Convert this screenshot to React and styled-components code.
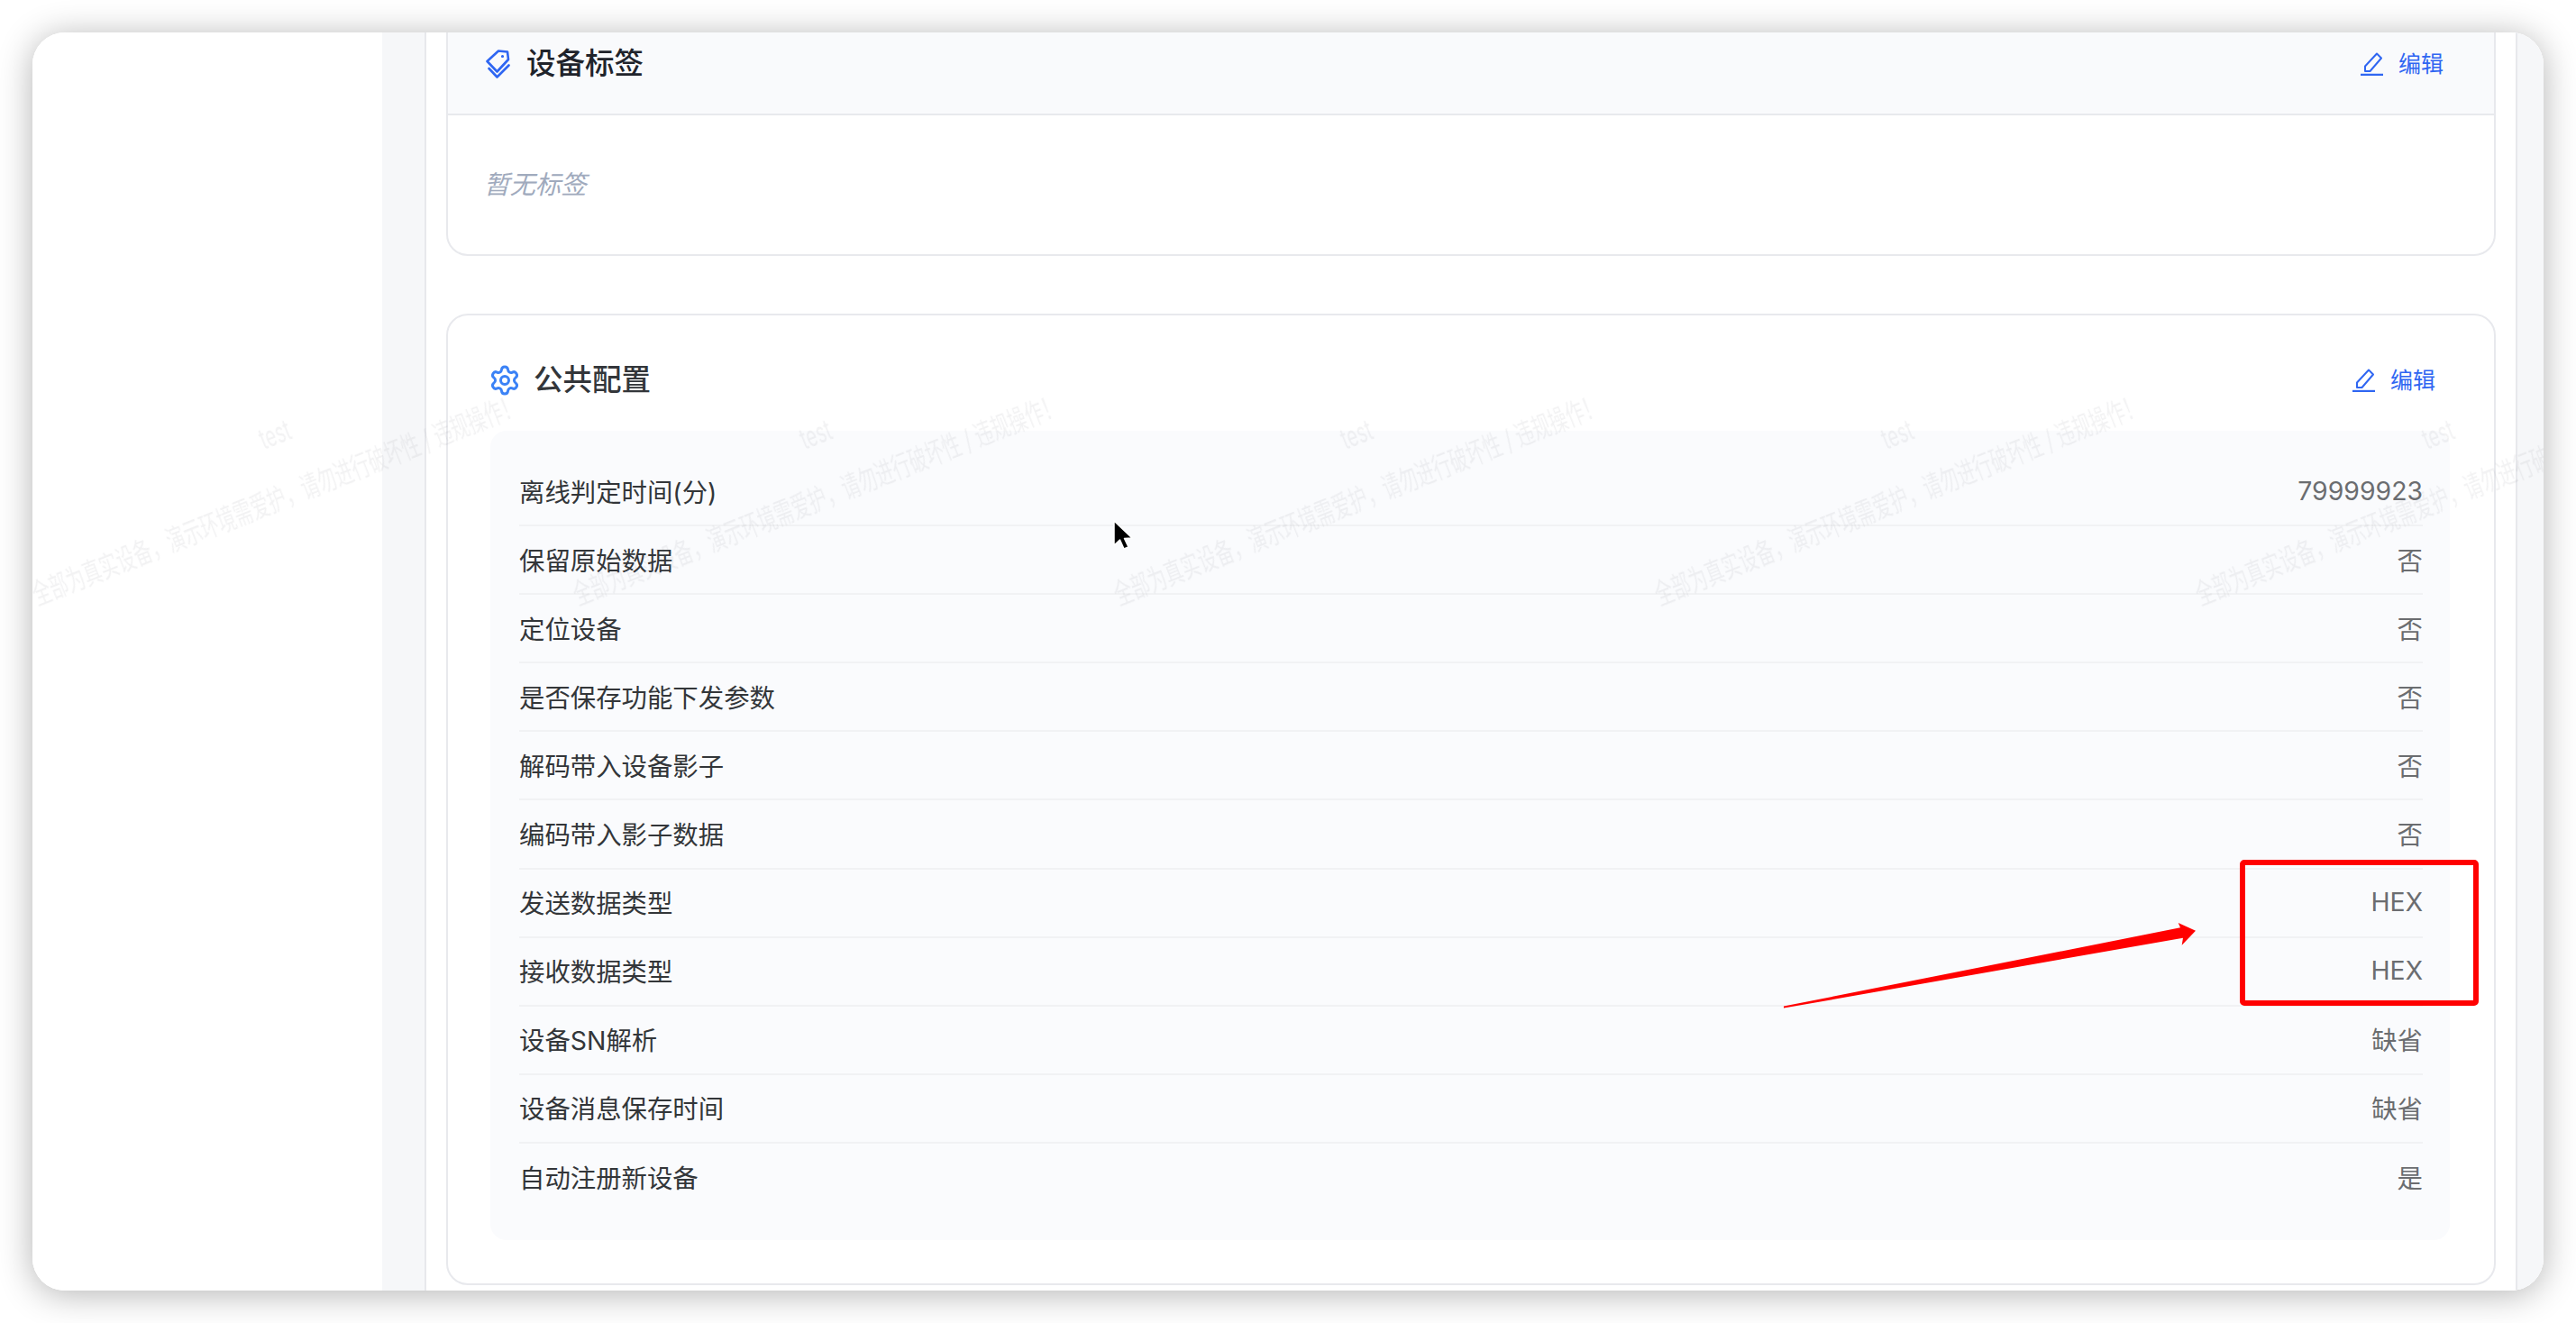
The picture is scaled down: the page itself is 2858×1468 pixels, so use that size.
import React from 'react';
import styled, { createGlobalStyle } from 'styled-components';
import { Settings } from 'lucide-react';

const FONT = `Inter, "Noto Sans CJK SC", "Noto Sans", sans-serif`;

const Global = createGlobalStyle`
  html, body { margin: 0; padding: 0; background: #fff; }
  body { font-family: ${FONT}; }
  * { box-sizing: border-box; }
`;

const Page = styled.div`
  position: relative;
  width: 2858px;
  height: 1468px;
  padding: 36px;
  background: #fff;
  overflow: hidden;
`;

const AppWindow = styled.div`
  position: relative;
  display: flex;
  width: 2786px;
  height: 1396px;
  border-radius: 36px;
  overflow: hidden;
  background: #fff;
`;

const WindowShadow = styled.div`
  position: absolute;
  left: 36px;
  top: 36px;
  width: 2786px;
  height: 1396px;
  border-radius: 36px;
  box-shadow: 0 4px 38px rgba(0, 0, 0, 0.3);
`;

const Sidebar = styled.aside`
  flex: 0 0 388px;
  background: #fff;
`;

const LeftGutter = styled.div`
  flex: 0 0 49px;
  background: #f6f7f9;
  border-right: 2px solid #e7e8ec;
`;

const RightGutter = styled.div`
  flex: 0 0 31px;
  background: #f6f7f9;
  border-left: 2px solid #e7e8ec;
`;

const Main = styled.main`
  flex: 1;
  min-width: 0;
  padding: 0 22px 0 22px;
  background: #fff;
  overflow: hidden;
`;

const TagCard = styled.section`
  margin-top: -23px;
  border: 2px solid #e8e9ed;
  border-radius: 24px;
  height: 271px;
  overflow: hidden;
`;

const TagHeader = styled.header`
  display: flex;
  align-items: center;
  justify-content: space-between;
  height: 113px;
  padding: 0 56px 0 42px;
  background: #f9fafc;
  border-bottom: 2px solid #e8e9ed;
`;

const Title = styled.h2`
  display: flex;
  align-items: center;
  gap: ${(p) => p.$gap}px;
  margin: 0;
  font-size: 32.5px;
  font-weight: 500;
  line-height: 40px;
  color: ${(p) => p.$color};
`;

const EditButton = styled.button`
  display: flex;
  align-items: center;
  gap: 17px;
  padding: 0;
  border: 0;
  background: none;
  font-family: ${FONT};
  font-size: 25px;
  line-height: 32px;
  color: #2f66f2;
`;

const EmptyText = styled.p`
  margin: 0;
  padding: 0 40px;
  height: 149px;
  display: flex;
  align-items: center;
  font-size: 28.4px;
  font-style: italic;
  color: #a0aabd;
`;

const ConfigCard = styled.section`
  margin-top: 64px;
  height: 1078px;
  padding: 0 49px 0 47px;
  border: 2px solid #e8e9ed;
  border-radius: 24px;
`;

const ConfigHeader = styled.header`
  display: flex;
  align-items: center;
  justify-content: space-between;
  height: 128px;
  padding: 15px 16px 0 0;
`;

const GearIcon = styled(Settings)`
  margin-left: -2px;
`;

const Panel = styled.div`
  padding: 30px 30px 31px 32px;
  background: #fafbfd;
  border-radius: 18px;
`;

const Row = styled.div`
  display: flex;
  align-items: center;
  justify-content: space-between;
  height: 76.1px;
  padding-bottom: 2px;
  font-size: 28.4px;
  border-bottom: ${(p) => (p.$last ? '0' : '2px solid #f1f2f4')};
`;

const Label = styled.span`
  color: #333639;
`;

const Value = styled.span`
  color: #6b6d70;
`;

const WatermarkLayer = styled.div`
  position: absolute;
  inset: 0;
  pointer-events: none;
  overflow: hidden;
`;

const WatermarkText = styled.span.attrs((p) => ({
  style: { left: p.$x, top: p.$y },
}))`
  position: absolute;
  white-space: nowrap;
  font-family: ${FONT};
  font-size: 32px;
  color: rgba(60, 60, 70, 0.065);
  filter: blur(0.4px);
  transform: translate(-50%, -50%) rotate(-21.6deg) scaleX(0.625);
`;

const Annotation = styled.svg`
  position: absolute;
  left: 0;
  top: 0;
  pointer-events: none;
`;

const TagIcon = () => (
  <svg width="27" height="32" viewBox="0 0 27 32" fill="none" stroke="#2f66f2" strokeWidth="2.6" strokeLinejoin="round" strokeLinecap="round">
    <path d="M14 1.5 L24 2.5 L25 11 L12.5 24.5 L1.5 13 Z" />
    <circle cx="18.5" cy="7.5" r="0.9" fill="#2f66f2" strokeWidth="1.4" />
    <path d="M3.5 21 L12.5 30.5 L25.5 17.5" />
  </svg>
);

const EditIcon = () => (
  <svg width="25" height="26" viewBox="0 0 25 26" fill="none" stroke="#2f66f2" strokeWidth="2">
    <path d="M5 21 V15.5 L18 1.5 L23 6.5 L10.5 21 Z" strokeLinejoin="round" />
    <path d="M0 25 H25" strokeWidth="2.4" />
  </svg>
);

const rows = [
  ['离线判定时间(分)', '79999923'],
  ['保留原始数据', '否'],
  ['定位设备', '否'],
  ['是否保存功能下发参数', '否'],
  ['解码带入设备影子', '否'],
  ['编码带入影子数据', '否'],
  ['发送数据类型', 'HEX'],
  ['接收数据类型', 'HEX'],
  ['设备SN解析', '缺省'],
  ['设备消息保存时间', '缺省'],
  ['自动注册新设备', '是'],
];

const WM = '全部为真实设备，演示环境需爱护，请勿进行破坏性 / 违规操作！';
const tiles = [];
for (let r = 0; r < 2; r++) {
  for (let c = 0; c < 5; c++) {
    tiles.push({ x: 269 + c * 600, y: 516 + r * 1000, k: `${r}-${c}` });
  }
}

export default function App() {
  return (
    <Page>
      <Global />
      <WindowShadow />
      <AppWindow>
        <Sidebar />
        <LeftGutter />
        <Main>
          <TagCard>
            <TagHeader>
              <Title $gap={18} $color="#20232b">
                <TagIcon />
                设备标签
              </Title>
              <EditButton>
                <EditIcon />
                编辑
              </EditButton>
            </TagHeader>
            <EmptyText>暂无标签</EmptyText>
          </TagCard>
          <ConfigCard>
            <ConfigHeader>
              <Title $gap={14} $color="#33363a">
                <GearIcon size={36} color="#3b82f6" strokeWidth={2} />
                公共配置
              </Title>
              <EditButton>
                <EditIcon />
                编辑
              </EditButton>
            </ConfigHeader>
            <Panel>
              {rows.map(([l, v], i) => (
                <Row key={l} $last={i === rows.length - 1}>
                  <Label>{l}</Label>
                  <Value>{v}</Value>
                </Row>
              ))}
            </Panel>
          </ConfigCard>
        </Main>
        <RightGutter />
        <WatermarkLayer>
          {tiles.map((t) => (
            <React.Fragment key={t.k}>
              <WatermarkText $x={t.x} $y={t.y - 70}>test</WatermarkText>
              <WatermarkText $x={t.x} $y={t.y}>{WM}</WatermarkText>
            </React.Fragment>
          ))}
        </WatermarkLayer>
      </AppWindow>
      <Annotation width="2858" height="1468" viewBox="0 0 2858 1468">
        <rect x="2488" y="957" width="259" height="156" rx="2" fill="none" stroke="#ff0000" strokeWidth="6" />
        <path d="M1979 1116.6 L2419 1029.3 L2416.7 1024 L2436 1032.7 L2420.7 1048.7 L2422 1040.7 L1979 1118.6 Z" fill="#ff0000" />
        <g transform="translate(1236 578)">
          <path d="M0 0 V27 L6.5 21 L11 31 L16 29 L11.5 19.5 L20 19 Z" fill="#000" stroke="#fff" strokeWidth="1.5" strokeLinejoin="round" />
        </g>
      </Annotation>
    </Page>
  );
}
